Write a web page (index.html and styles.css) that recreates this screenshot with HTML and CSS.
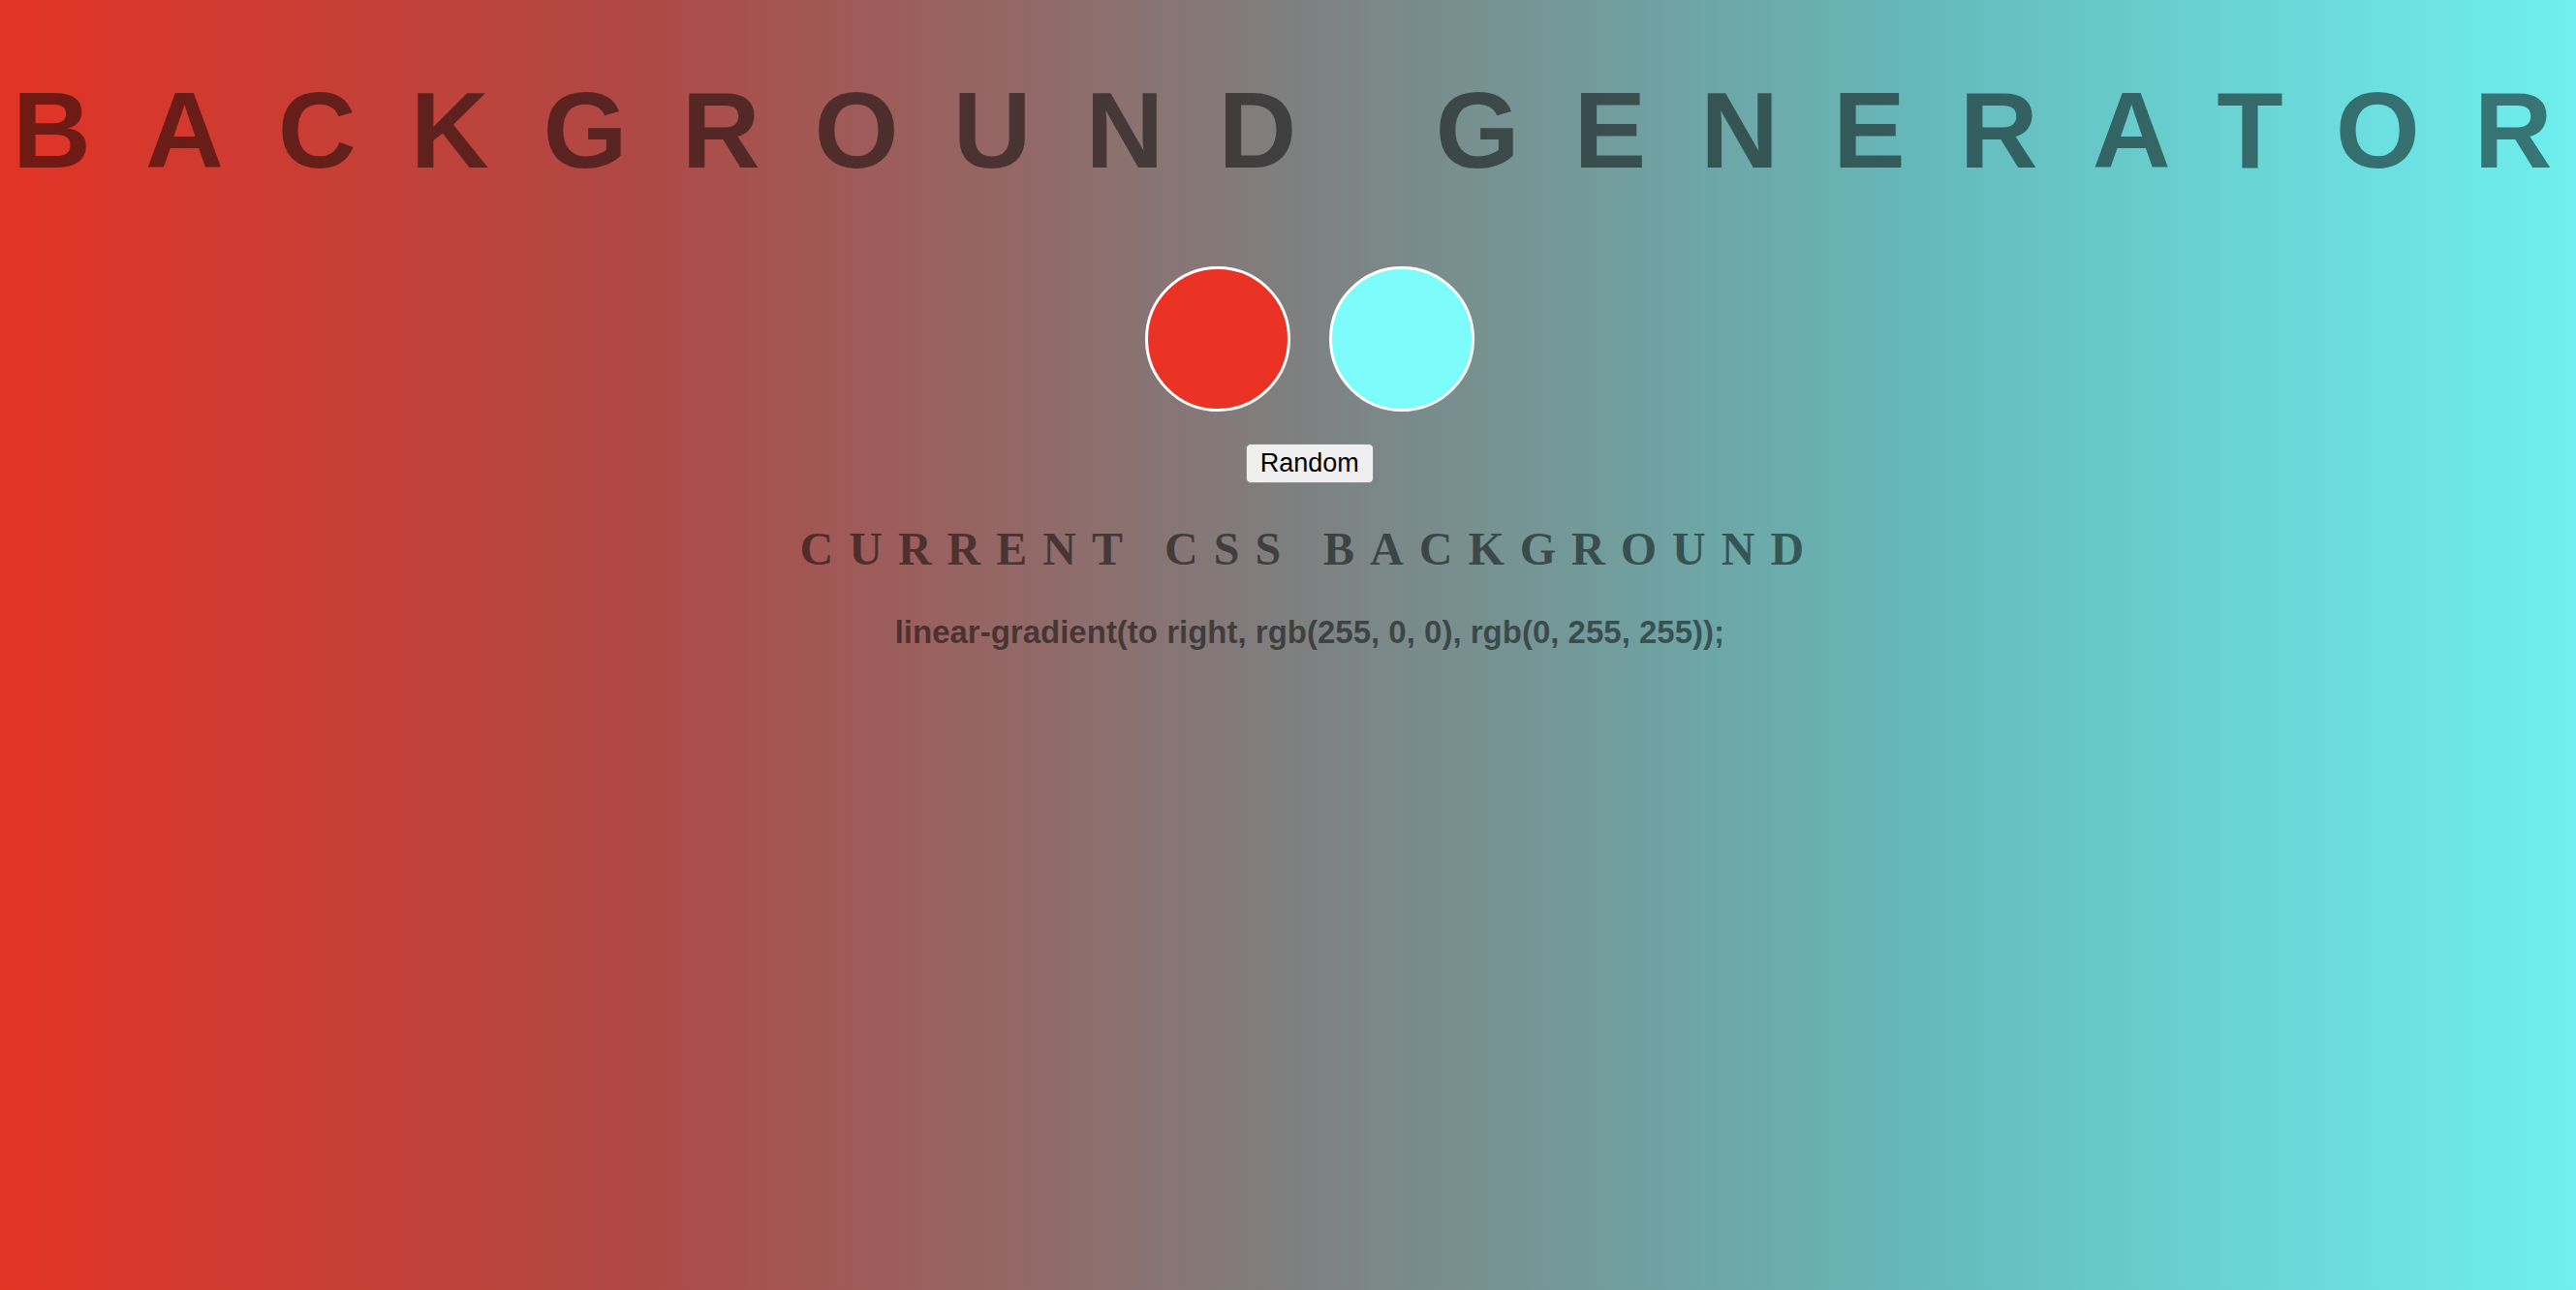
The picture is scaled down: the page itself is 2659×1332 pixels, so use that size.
FILE: index.html
```html
<!DOCTYPE html>
<html lang="en">
<head>
<meta charset="utf-8">
<title>Background Generator</title>
<link rel="stylesheet" href="styles.css">
</head>
<body>
  <h1 class="title">Background Generato<span class="title__last">r</span></h1>
  <div class="swatches">
    <span class="swatch swatch--red"></span>
    <span class="swatch swatch--cyan"></span>
  </div>
  <div class="actions">
    <button class="random" type="button">Random</button>
  </div>
  <h2 class="subtitle">Current CSS Background</h2>
  <h3 class="css-value">linear-gradient(to right, rgb(255, 0, 0), rgb(0, 255, 255));</h3>
</body>
</html>
```
FILE: styles.css
```css
html {
  min-height: 100%;
  overflow-x: hidden;
  background: linear-gradient(to right,
    rgb(226, 51, 37) 0%,
    rgb(174, 73, 69) 25%,
    rgb(127, 127, 127) 50%,
    rgb(101, 186, 187) 75%,
    rgb(111, 239, 239) 100%);
}

body {
  margin: 0 0 0 13px;
  width: max-content;
  text-align: center;
  color: rgba(0, 0, 0, 0.5);
  font-family: "Liberation Serif", "Times New Roman", serif;
}

.title {
  margin: 71px 0 76px;
  padding-right: 56px;
  font: 700 112px/128px "Liberation Sans", Arial, sans-serif;
  letter-spacing: 56px;
  text-transform: uppercase;
  white-space: nowrap;
}

.title__last {
  letter-spacing: 0;
}

.swatches {
  display: flex;
  justify-content: center;
  gap: 40px;
}

.swatch {
  width: 150px;
  height: 150px;
  box-sizing: border-box;
  border: 3px solid #fff;
  border-radius: 50%;
}

.swatch--red {
  background: rgb(234, 51, 36);
}

.swatch--cyan {
  background: rgb(124, 252, 250);
}

.actions {
  display: flex;
  justify-content: center;
  margin-top: 33px;
}

.random {
  margin: 0;
  padding: 4px 14px;
  font: 400 27px/31px "Liberation Sans", Arial, sans-serif;
  color: #000;
  background: #efefef;
  border: 1px solid #8d8d8d;
  border-radius: 5px;
}

.subtitle {
  margin: 40px 0 40px;
  font: 700 48px/55px "Liberation Serif", "Times New Roman", serif;
  letter-spacing: 16px;
  text-transform: uppercase;
}

.css-value {
  margin: 0;
  font: 700 33px/37px "Liberation Sans", Arial, sans-serif;
}
```
